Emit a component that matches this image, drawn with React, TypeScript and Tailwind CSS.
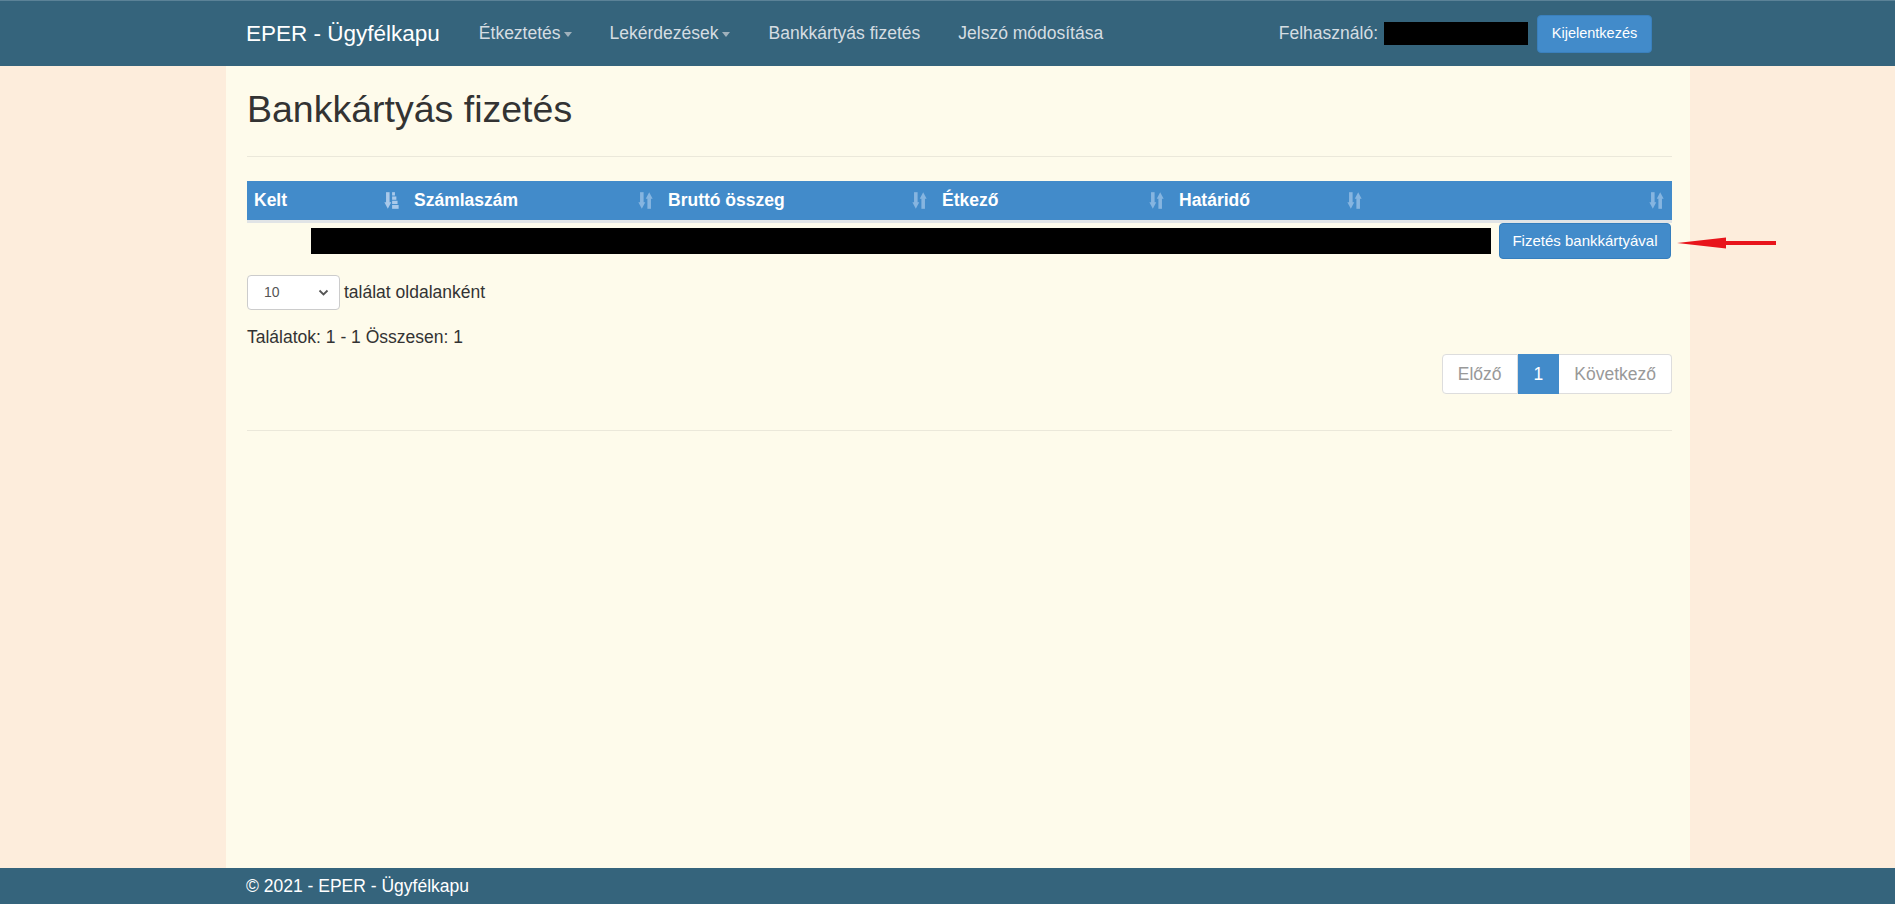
import React from "react";

const font = { fontFamily: '"Liberation Sans", Arial, sans-serif' };

const SortIcon = ({ active }: { active?: boolean }) => (
  <svg width="15" height="19" viewBox="0 0 12 16" className="shrink-0">
    <g fill={active ? "#a9c9ea" : "#86b5e0"}>
      <rect x="1.4" y="1" width="3" height="10" />
      <polygon points="0,9.5 5.8,9.5 2.9,15" />
      {active ? (
        <>
          <rect x="6.5" y="1" width="2.4" height="2.8" />
          <rect x="6.5" y="4.6" width="3.6" height="2.8" />
          <rect x="6.5" y="8.2" width="4.6" height="2.8" />
          <rect x="6.5" y="11.8" width="5.5" height="3.2" />
        </>
      ) : (
        <>
          <polygon points="6.2,6.5 12,6.5 9.1,1" />
          <rect x="7.6" y="6" width="3" height="9" />
        </>
      )}
    </g>
  </svg>
);

const Caret = () => (
  <span className="inline-block w-0 h-0 ml-[3px] mt-[2px] border-l-[4.5px] border-r-[4.5px] border-t-[5px] border-l-transparent border-r-transparent border-t-[#9fb1bc]" />
);

const columns = [
  { title: "Kelt", w: "w-[160px]", active: true },
  { title: "Számlaszám", w: "w-[254px]" },
  { title: "Bruttó összeg", w: "w-[274px]" },
  { title: "Étkező", w: "w-[237px]" },
  { title: "Határidő", w: "w-[198px]" },
  { title: "", w: "flex-1" },
];

export default function App() {
  return (
    <div style={font} className="relative h-screen flex flex-col bg-[#fdeddc] text-[#333333] overflow-hidden">
      {/* navbar */}
      <div className="h-[66px] shrink-0 bg-[#35647c] border-t border-[#5b8297]">
        <div className="ml-[226px] w-[1464px] h-full flex items-center pl-[20px] pr-[38px]">
          <span className="text-[22.5px] text-white">EPER - Ügyfélkapu</span>
          <span className="ml-[39px] text-[17.5px] text-[#d5dde2] flex items-center">
            Étkeztetés
            <Caret />
          </span>
          <span className="ml-[38px] text-[17.5px] text-[#d5dde2] flex items-center">
            Lekérdezések
            <Caret />
          </span>
          <span className="ml-[39px] text-[17.5px] text-[#d5dde2]">Bankkártyás fizetés</span>
          <span className="ml-[38px] text-[17.5px] text-[#d5dde2]">Jelszó módosítása</span>
          <div className="ml-auto flex items-center">
            <span className="text-[17.5px] text-[#d5dde2]">Felhasználó:</span>
            <span className="ml-[6px] w-[144px] h-[23px] bg-black" />
            <button className="ml-[9px] w-[115px] h-[38px] rounded-[4px] bg-[#428bca] border border-[#3a80bd] text-white text-[14.5px]">
              Kijelentkezés
            </button>
          </div>
        </div>
      </div>

      {/* content */}
      <div className="flex-1 ml-[226px] w-[1464px] bg-[#fefbeb] pl-[21px] pr-[18px] pt-[23px]">
        <h2 className="text-[37.5px] leading-[40px] text-[#333333]">Bankkártyás fizetés</h2>
        <div className="mt-[27px] h-px bg-[#ebe8da]" />

        <div className="mt-[24px]">
          <div className="flex h-[39px] bg-[#428bca] border-b-[3px] border-[#e1e4e6] box-content">
            {columns.map((c, i) => (
              <div key={i} className={`${c.w} flex items-center justify-between pl-[7px] pr-[8px]`}>
                <span className="text-[17.5px] font-bold text-white">{c.title}</span>
                <SortIcon active={c.active} />
              </div>
            ))}
          </div>
          <div className="flex items-start h-[39px]">
            <div className="ml-[64px] mt-[5px] w-[1180px] h-[26px] bg-black" />
            <button className="ml-auto mr-[1px] w-[172px] h-[36px] rounded-[4px] bg-[#428bca] border border-[#357ebd] text-white text-[15px]">
              Fizetés bankkártyával
            </button>
          </div>
        </div>

        <div className="mt-[13px] flex items-center">
          <div className="w-[93px] h-[35px] bg-white border border-[#cccccc] rounded-[4px] flex items-center justify-between pl-[16px] pr-[10px]">
            <span className="text-[14px] text-[#555555]">10</span>
            <svg width="11" height="8" viewBox="0 0 11 8">
              <polyline points="1.5,1.5 5.5,5.5 9.5,1.5" fill="none" stroke="#555555" strokeWidth="1.8" />
            </svg>
          </div>
          <span className="ml-[4px] text-[17.5px]">találat oldalanként</span>
        </div>

        <div className="mt-[15px] text-[17.5px] leading-[24px]">Találatok: 1 - 1 Összesen: 1</div>

        <div className="mt-[5px] flex justify-end">
          <div className="flex text-[17.5px] leading-[24px]">
            <span className="px-[15px] py-[7px] bg-white border border-[#dddddd] rounded-l-[4px] text-[#999999]">Előző</span>
            <span className="px-[15px] py-[7px] bg-[#428bca] border border-[#428bca] text-white">1</span>
            <span className="px-[15px] py-[7px] bg-white border border-[#dddddd] border-l-0 rounded-r-[4px] text-[#999999]">Következő</span>
          </div>
        </div>

        <div className="mt-[36px] h-px bg-[#ebe8da]" />
      </div>

      {/* footer */}
      <div className="h-[36px] shrink-0 bg-[#35647c] flex items-center">
        <span className="ml-[246px] text-[17.5px] text-white">© 2021 - EPER - Ügyfélkapu</span>
      </div>

      {/* annotation arrow */}
      <svg className="absolute left-[1676px] top-[236px]" width="102" height="14" viewBox="0 0 102 14">
        <polygon points="1,7 50,1.5 50,12.5" fill="#e8141b" />
        <rect x="40" y="5" width="60" height="4" fill="#e8141b" />
      </svg>
    </div>
  );
}
